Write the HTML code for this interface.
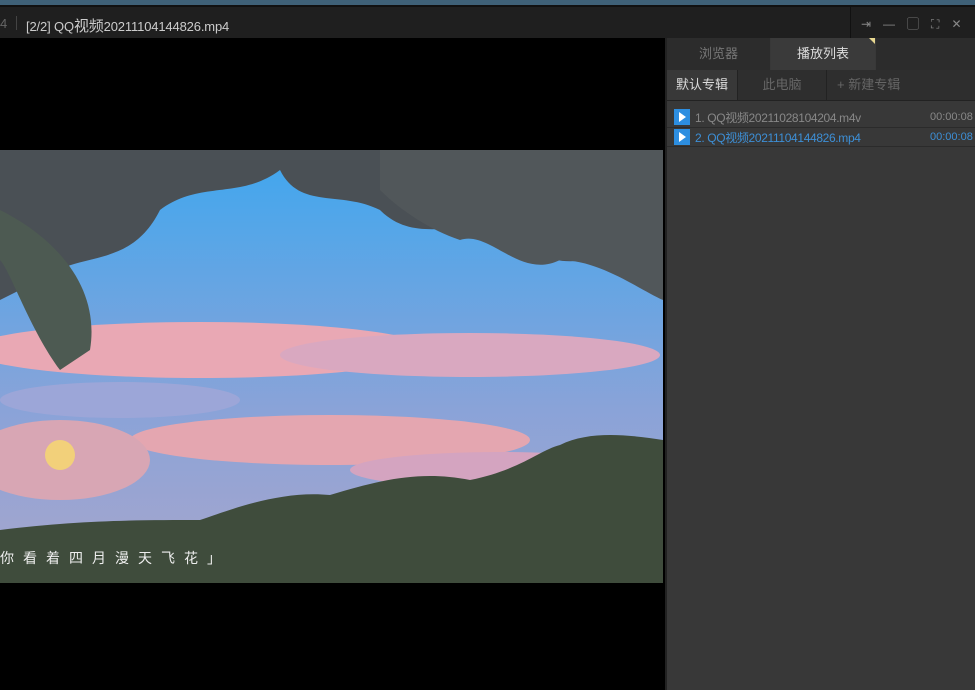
<!DOCTYPE html>
<html><head><meta charset="utf-8"><style>
*{margin:0;padding:0;box-sizing:border-box}
body{width:975px;height:690px;overflow:hidden;background:#000;font-family:"Liberation Sans","Noto Sans CJK SC",sans-serif;position:relative}
.abs{position:absolute}
</style></head><body>
<div class="abs" style="left:0;top:0;width:975px;height:7px;background:#3f6178"></div>
<div class="abs" style="left:0;top:5px;width:975px;height:2px;background:#111"></div>
<div class="abs" style="left:0;top:7px;width:975px;height:31px;background:#1f1f1f"></div>
<div class="abs" style="left:0;top:16px;font-size:13px;color:#666">4</div>
<div class="abs" style="left:16px;top:16px;width:1px;height:14px;background:#444"></div>
<div class="abs" style="left:26px;top:15px;font-size:13px;color:#ccc;letter-spacing:-0.15px">[2/2] QQ<span style="font-size:15px">视频</span>20211104144826.mp4</div>
<div class="abs" style="left:850px;top:7px;width:1px;height:31px;background:#111"></div>
<div class="abs" style="left:861px;top:15px;font-size:12px;color:#888;letter-spacing:12px">⇥—▢⛶✕</div>
<div class="abs" style="left:665px;top:38px;width:310px;height:652px;background:#383838"></div>
<div class="abs" style="left:665px;top:38px;width:2px;height:652px;background:#222"></div>
<div class="abs" style="left:667px;top:38px;width:103px;height:32px;background:#2c2c2c;color:#777;font-size:13px;text-align:center;line-height:32px">浏览器</div>
<div class="abs" style="left:771px;top:38px;width:104px;height:32px;background:#3a3a3a;color:#ddd;font-size:13px;text-align:center;line-height:32px">播放列表</div>
<div class="abs" style="left:869px;top:38px;width:0;height:0;border-top:6px solid #e8d890;border-left:6px solid transparent"></div>
<div class="abs" style="left:876px;top:38px;width:99px;height:32px;background:#2c2c2c"></div>
<div class="abs" style="left:667px;top:70px;width:70px;height:30px;background:#383838;color:#ddd;font-size:13px;text-align:center;line-height:30px">默认专辑</div>
<div class="abs" style="left:737px;top:70px;width:89px;height:30px;background:#2e2e2e;border-left:1px solid #222;color:#666;font-size:13px;text-align:center;line-height:30px">此电脑</div>
<div class="abs" style="left:826px;top:70px;width:149px;height:30px;background:#2e2e2e;border-left:1px solid #222;color:#666;font-size:13px;padding-left:10px;line-height:30px">+ 新建专辑</div>
<div class="abs" style="left:667px;top:100px;width:308px;height:1px;background:#222"></div>
<div class="abs" style="left:674px;top:109px;width:16px;height:16px;background:#2d8ee0"></div>
<div class="abs" style="left:679px;top:112px;border-left:7px solid #fff;border-top:5px solid transparent;border-bottom:5px solid transparent"></div>
<div class="abs" style="left:695px;top:109px;font-size:12px;color:#888;letter-spacing:-0.35px">1. QQ视频20211028104204.m4v</div>
<div class="abs" style="left:930px;top:111px;font-size:11px;color:#888">00:00:08</div>
<div class="abs" style="left:667px;top:127px;width:308px;height:1px;background:#2b2b2b"></div>
<div class="abs" style="left:674px;top:129px;width:16px;height:16px;background:#2d8ee0"></div>
<div class="abs" style="left:679px;top:132px;border-left:7px solid #fff;border-top:5px solid transparent;border-bottom:5px solid transparent"></div>
<div class="abs" style="left:695px;top:129px;font-size:12px;color:#3d8fd6;letter-spacing:-0.35px">2. QQ视频20211104144826.mp4</div>
<div class="abs" style="left:930px;top:131px;font-size:11px;color:#3d8fd6">00:00:08</div>
<div class="abs" style="left:667px;top:146px;width:308px;height:1px;background:#2b2b2b"></div>
<svg class="abs" style="left:0;top:150px" width="663" height="433">
<defs><linearGradient id="s" x1="0" y1="0" x2="0" y2="1"><stop offset="0" stop-color="#3ea7ef"/><stop offset=".6" stop-color="#8aa3d8"/><stop offset="1" stop-color="#a8a6cc"/></linearGradient></defs>
<rect width="663" height="433" fill="url(#s)"/>
<ellipse cx="200" cy="200" rx="230" ry="28" fill="#e9a8b4"/>
<ellipse cx="470" cy="205" rx="190" ry="22" fill="#d9a8c0"/>
<ellipse cx="330" cy="290" rx="200" ry="25" fill="#e4a6b0"/>
<ellipse cx="60" cy="310" rx="90" ry="40" fill="#d8a6b4"/>
<ellipse cx="120" cy="250" rx="120" ry="18" fill="#9ca6d8"/>
<ellipse cx="500" cy="320" rx="150" ry="18" fill="#d4a4c0"/>
<path d="M0 0H663V60C620 110 560 130 520 90C470 60 420 100 380 60C340 40 300 60 280 20C240 50 200 30 160 60C130 120 80 100 40 130L0 150Z" fill="#4a5055"/>
<path d="M380 0H663V150C640 140 600 110 560 110C520 130 490 80 460 90C430 80 400 60 380 40Z" fill="#51575a"/>
<path d="M0 60C60 90 100 140 90 200L60 220C30 180 10 120 0 110Z" fill="#4d5a52"/>
<path d="M0 433V380C80 370 140 370 200 370C230 360 280 340 330 345C380 330 420 320 470 330C520 320 540 300 560 295C590 280 630 285 663 290V433Z" fill="#3f4c3c"/>
<circle cx="60" cy="305" r="15" fill="#f2d07a"/>
</svg>
<div class="abs" style="left:0;top:548px;font-size:14px;color:#eee;letter-spacing:9px">你看着四月漫天飞花」</div>
</body></html>
